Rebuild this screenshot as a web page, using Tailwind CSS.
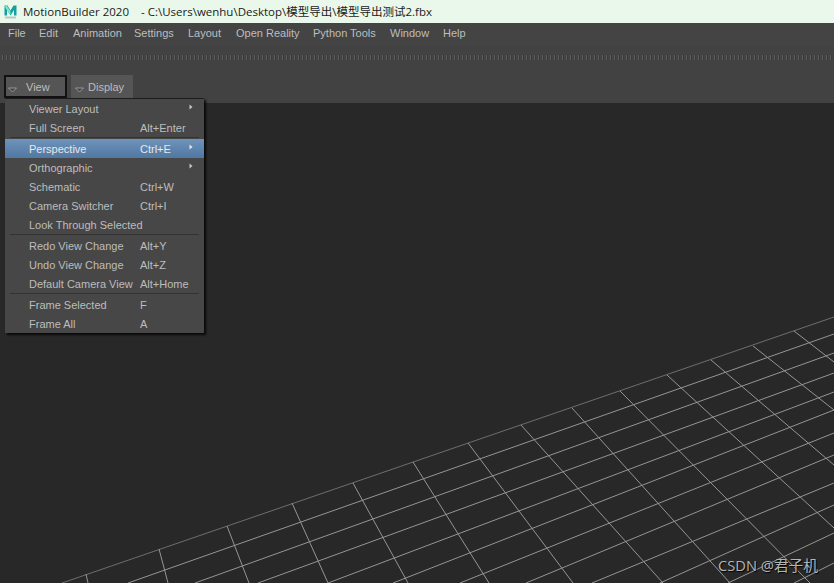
<!DOCTYPE html>
<html>
<head>
<meta charset="utf-8">
<script src="https://cdn.jsdelivr.net/npm/@tailwindcss/browser@4"></script>
</head>
<body class="m-0 overflow-hidden bg-[#282828]">
<div class="relative flex h-[583px] w-[834px] flex-col overflow-hidden font-['Liberation_Sans','Noto_Sans_CJK_SC',sans-serif] text-[11px] text-[#bdbdbd]">
  <header class="flex h-[23px] shrink-0 items-center bg-[#e9f8ea] pl-[4px] font-['Open_Sans','Noto_Sans_CJK_SC',sans-serif] text-[11.500px] text-[#1a1a1a]">
    <svg class="h-[14px] w-[13px]" viewBox="0 0 13 14"><path d="M0.500 10.500V0.500H3.500L6.500 5.500 9.500 0.500H12.500V10.500H10V5L6.500 10.500 3 5V10.500Z" fill="#14a0a0"/><path d="M1 1H3L6.500 6.500V10L1.500 3Z" fill="#7fe6c8"/><rect x="1" y="11.500" width="11" height="2" fill="#b5c9c9"/></svg>
    <span class="ml-[6px] w-[118px] whitespace-pre">MotionBuilder 2020</span>
    <span class="whitespace-pre">- C:\Users\wenhu\Desktop\模型导出\模型导出测试2.fbx</span>
  </header>
  <nav class="flex h-[23px] shrink-0 items-center bg-[#444444] pb-[2px] pl-[8px]">
    <span class="w-[31px]">File</span><span class="w-[34px]">Edit</span><span class="w-[61px]">Animation</span><span class="w-[54px]">Settings</span><span class="w-[48px]">Layout</span><span class="w-[77px]">Open Reality</span><span class="w-[77px]">Python Tools</span><span class="w-[53px]">Window</span><span>Help</span>
  </nav>
  <div class="h-[57px] shrink-0 bg-[#424242]">
    <div class="mx-[2px] mt-[9px] h-[5px] bg-[repeating-linear-gradient(90deg,#5c5c5c_0_1px,#3a3a3a_1px_2px,#444444_2px_4px)]"></div>
    <div class="mt-[15px] flex items-start pl-[4px]">
      <button class="flex h-[23px] w-[63px] items-center border-2 border-[#111] bg-[#555555] pl-[2px]">
        <svg class="mt-[7px] h-[6px] w-[9px]" viewBox="0 0 9 6"><path d="M0.500 1H8.500L4.500 5Z" fill="#444" stroke="#aaa" stroke-width="0.800"/></svg>
        <span class="ml-[9px] mt-[1px]">View</span>
      </button>
      <button class="ml-[4px] flex h-[23px] w-[62px] items-center bg-[#555555] pl-[4px]">
        <svg class="mt-[7px] h-[6px] w-[9px]" viewBox="0 0 9 6"><path d="M0.500 1H8.500L4.500 5Z" fill="#444" stroke="#aaa" stroke-width="0.800"/></svg>
        <span class="ml-[4px] mt-[1px]">Display</span>
      </button>
    </div>
  </div>
  <main class="relative min-h-0 flex-1 bg-[#282828]">
    <svg class="absolute inset-0" width="834" height="480" viewBox="0 103 834 480" fill="none" stroke="#959595" stroke-width="1">
      <path stroke="#6e6e6e" d="M62 583 L834 317"/>
      <path d="M128 583 L834 334"/>
      <path d="M195 583 L834 353"/>
      <path d="M258 583 L834 373"/>
      <path d="M328 583 L834 392"/>
      <path d="M393 583 L834 410"/>
      <path d="M460 583 L834 433"/>
      <path d="M526 583 L834 455"/>
      <path d="M592 583 L834 483"/>
      <path d="M660 583 L834 505"/>
      <path d="M728 583 L834 533"/>
      <path d="M794 583 L834 563"/>
      <path d="M86 574 L88 583"/>
      <path d="M159 549 L168 583"/>
      <path d="M227 526 L249 583"/>
      <path d="M292 503 L328 583"/>
      <path d="M353 483 L408 583"/>
      <path d="M413 462 L489 583"/>
      <path d="M468 443 L573 583"/>
      <path d="M521 425 L663 583"/>
      <path d="M572 408 L730 583"/>
      <path d="M620 391 L810 583"/>
      <path d="M667 375 L834 528"/>
      <path d="M711 360 L834 465"/>
      <path d="M753 346 L834 410"/>
      <path d="M794 331 L834 362"/>
    </svg>
    <div class="absolute bottom-[7px] right-[16px] font-['Open_Sans','Noto_Sans_CJK_SC',sans-serif] text-[14.700px] text-[#b4b4b4] [text-shadow:1px_1px_1px_#000]">CSDN @君子机</div>
  </main>
  <div class="absolute left-[5px] top-[98px] flex h-[235px] w-[199px] flex-col border-t border-[#1e1e1e] bg-[#474747] shadow-[2px_2px_2px_rgba(0,0,0,0.8)]">
    <div class="flex h-[19px] shrink-0 items-center pl-[24px] pt-[2px]"><span class="w-[111px] whitespace-nowrap">Viewer Layout</span><span class="flex-1"></span><svg class="mr-[11px] mb-[5px] h-[6px] w-[4px]" viewBox="0 0 4 6"><path d="M0.500 0.500L3.500 3 0.500 5.500Z" fill="#c4c4c4"/></svg></div>
    <div class="flex h-[19px] shrink-0 items-center pl-[24px] pt-[2px]"><span class="w-[111px] whitespace-nowrap">Full Screen</span><span class="whitespace-nowrap">Alt+Enter</span></div>
    <div class="mx-[5px] h-[2px] shrink-0 border-t border-[#333]"></div>
    <div class="flex h-[19px] shrink-0 items-center bg-[linear-gradient(#6f93ba,#5078a3)] pl-[24px] pt-[2px] text-[#e8e8e8]"><span class="w-[111px] whitespace-nowrap">Perspective</span><span class="whitespace-nowrap">Ctrl+E</span><span class="flex-1"></span><svg class="mr-[11px] mb-[5px] h-[6px] w-[4px]" viewBox="0 0 4 6"><path d="M0.500 0.500L3.500 3 0.500 5.500Z" fill="#e8e8e8"/></svg></div>
    <div class="flex h-[19px] shrink-0 items-center pl-[24px] pt-[2px]"><span class="w-[111px] whitespace-nowrap">Orthographic</span><span class="flex-1"></span><svg class="mr-[11px] mb-[5px] h-[6px] w-[4px]" viewBox="0 0 4 6"><path d="M0.500 0.500L3.500 3 0.500 5.500Z" fill="#c4c4c4"/></svg></div>
    <div class="flex h-[19px] shrink-0 items-center pl-[24px] pt-[2px]"><span class="w-[111px] whitespace-nowrap">Schematic</span><span class="whitespace-nowrap">Ctrl+W</span></div>
    <div class="flex h-[19px] shrink-0 items-center pl-[24px] pt-[2px]"><span class="w-[111px] whitespace-nowrap">Camera Switcher</span><span class="whitespace-nowrap">Ctrl+I</span></div>
    <div class="flex h-[19px] shrink-0 items-center pl-[24px] pt-[2px]"><span class="w-[111px] whitespace-nowrap">Look Through Selected</span></div>
    <div class="mx-[5px] h-[2px] shrink-0 border-t border-[#333]"></div>
    <div class="flex h-[19px] shrink-0 items-center pl-[24px] pt-[2px]"><span class="w-[111px] whitespace-nowrap">Redo View Change</span><span class="whitespace-nowrap">Alt+Y</span></div>
    <div class="flex h-[19px] shrink-0 items-center pl-[24px] pt-[2px]"><span class="w-[111px] whitespace-nowrap">Undo View Change</span><span class="whitespace-nowrap">Alt+Z</span></div>
    <div class="flex h-[19px] shrink-0 items-center pl-[24px] pt-[2px]"><span class="w-[111px] whitespace-nowrap">Default Camera View</span><span class="whitespace-nowrap">Alt+Home</span></div>
    <div class="mx-[5px] h-[2px] shrink-0 border-t border-[#333]"></div>
    <div class="flex h-[19px] shrink-0 items-center pl-[24px] pt-[2px]"><span class="w-[111px] whitespace-nowrap">Frame Selected</span><span>F</span></div>
    <div class="flex h-[19px] shrink-0 items-center pl-[24px] pt-[2px]"><span class="w-[111px] whitespace-nowrap">Frame All</span><span>A</span></div>
  </div>
</div>
</body>
</html>
